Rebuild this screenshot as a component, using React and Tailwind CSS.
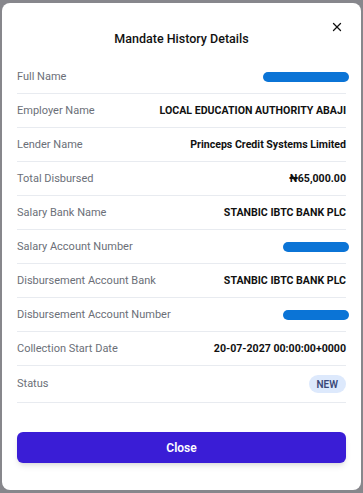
import React from "react";
import { X } from "lucide-react";

// 맨데이트 상세 정보 행 목록
const rows = [
  { label: "Full Name", redacted: "w-[86px]" },
  { label: "Employer Name", value: "LOCAL EDUCATION AUTHORITY ABAJI" },
  { label: "Lender Name", value: "Princeps Credit Systems Limited" },
  { label: "Total Disbursed", value: "₦65,000.00" },
  { label: "Salary Bank Name", value: "STANBIC IBTC BANK PLC" },
  { label: "Salary Account Number", redacted: "w-[66px]" },
  { label: "Disbursement Account Bank", value: "STANBIC IBTC BANK PLC" },
  { label: "Disbursement Account Number", redacted: "w-[66px]" },
  { label: "Collection Start Date", value: "20-07-2027 00:00:00+0000" },
];

function Row({ label, value, redacted }) {
  return (
    <div className="flex items-center justify-between h-[34px] border-b border-[#e8ebf0]">
      <span className="text-[11px] text-[#6b6f78] mt-[1px]">{label}</span>
      {redacted ? (
        <span className={`${redacted} h-[10px] -mr-[3px] rounded-full bg-[#0b74d6]`} />
      ) : (
        <span className="text-[10.6px] font-bold text-[#111] mt-[1px]">{value}</span>
      )}
    </div>
  );
}

export default function App() {
  return (
    <div
      className="w-[363px] h-[493px] bg-[#87878c] pt-[3px] px-[2px] overflow-hidden"
      style={{ fontFamily: "Roboto, 'Noto Sans', sans-serif" }}
    >
      <div className="bg-white rounded-lg h-[487px] px-[15px] pt-[15px]">
        {/* ── 헤더 ── */}
        <div className="relative h-[42px] flex items-center justify-center">
          <span className="text-[12.5px] font-medium text-[#111] mt-[1px]">
            Mandate History Details
          </span>
          <button className="absolute right-[2px] top-[2px] text-[#111]">
            <X size={14} strokeWidth={2.2} />
          </button>
        </div>

        {/* ── 상세 행 ── */}
        {rows.map((r) => (
          <Row key={r.label} {...r} />
        ))}
        <div className="flex items-center justify-between h-[37px] border-b border-[#e8ebf0]">
          <span className="text-[11px] text-[#6b6f78]">Status</span>
          <span className="h-[18px] px-[8px] rounded-full bg-[#dde9fc] text-[10px] font-semibold text-[#3b4878] flex items-center">
            NEW
          </span>
        </div>

        {/* ── 닫기 버튼 ── */}
        <button className="mt-[29px] w-full h-[31px] rounded-md bg-[#3a1dd6] text-white text-[12px] font-semibold shadow-md">
          Close
        </button>
      </div>
    </div>
  );
}
